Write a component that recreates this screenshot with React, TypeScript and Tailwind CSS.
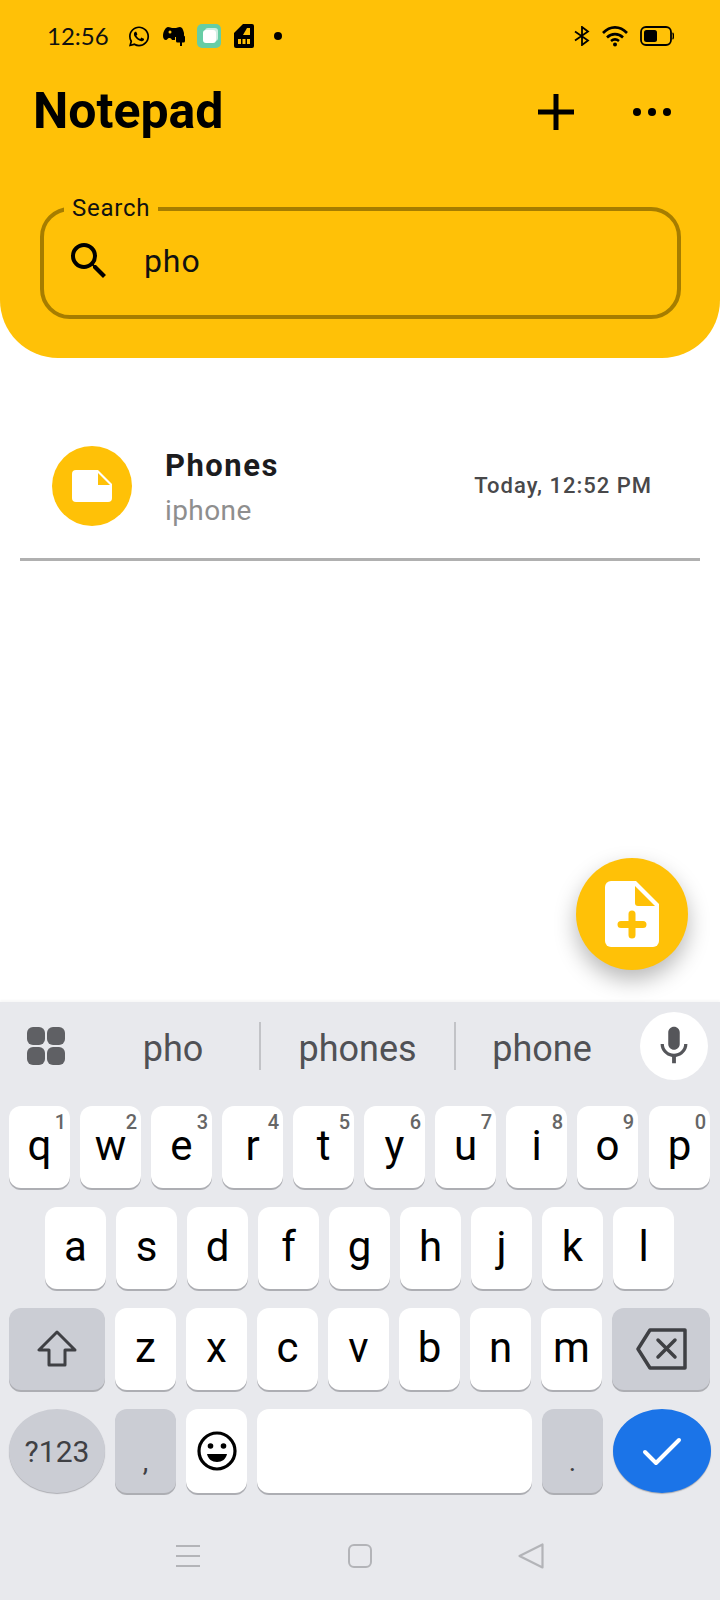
import { MdMic, MdSearch } from 'react-icons/md'
import { FaWhatsapp } from 'react-icons/fa'

const ROW_ONE = [
  ['q', '1'],
  ['w', '2'],
  ['e', '3'],
  ['r', '4'],
  ['t', '5'],
  ['y', '6'],
  ['u', '7'],
  ['i', '8'],
  ['o', '9'],
]
const ROW_TWO = ['a', 's', 'd', 'f', 'g', 'h', 'j', 'k', 'l']
const ROW_THREE = ['z', 'x', 'c', 'v', 'b', 'n', 'm']

function LetterKey({ label, hint }: { label: string; hint?: string }) {
  return (
    <div className="relative flex h-full w-[61px] shrink-0 items-center justify-center rounded-[12px] bg-white text-[42px] leading-none text-black shadow-[0_2px_0_#adaeb3]">
      <span className="relative top-[-1px]">{label}</span>
      {hint && (
        <span className="absolute right-[4px] top-[4px] text-[20px] font-medium leading-[24px] text-[#666]">{hint}</span>
      )}
    </div>
  )
}

function StatusBar() {
  return (
    <div className="flex h-[72px] items-center justify-between pl-[47px] pr-[46px]">
      <div className="flex items-center">
        <span className="w-[81px] font-['Lato'] text-[24px] leading-none text-[#111]">12:56</span>
        <FaWhatsapp className="h-[23px] w-[22px] text-black" />
        <svg viewBox="0 0 22 20" className="ml-[13px] h-[20px] w-[22px]">
          <path d="M5 1c2 0 3 1 4 1h4c1 0 2-1 4-1 2 0 3 2 4 6v4H12v3H9c-1-2-2-2-3-2-1 0-2 2-3 2-2 0-3-2-3-4 0-5 3-9 5-9z" fill="#000" />
          <circle cx="7" cy="6" r="1.500" fill="#FFC107" />
          <path d="M13 11a1.500 1.500 0 0 1 1.500-1.500h6A1.500 1.500 0 0 1 22 11v4a1.500 1.500 0 0 1-1.500 1.500H19V20h-2v-3.500h-2.500A1.500 1.500 0 0 1 13 15z" fill="#000" />
        </svg>
        <div className="ml-[12px] flex h-[24px] w-[24px] items-center justify-center rounded-[5px] bg-[#66CDA5]">
          <div className="h-[13px] w-[13px] rounded-[3px] bg-white shadow-[2px_-2px_0_#cfeee2]" />
        </div>
        <svg viewBox="0 0 20 24" className="ml-[13px] h-[24px] w-[20px]">
          <path d="M9 0h9a2 2 0 0 1 2 2v20a2 2 0 0 1-2 2H2a2 2 0 0 1-2-2V9z" fill="#000" />
          <path d="M13 4h3v7H9z" fill="#FFC107" />
          <path d="M4 15h3v5H4zM8.500 15h3v5h-3zM13 15h3v5h-3z" fill="#FFC107" />
        </svg>
        <div className="ml-[20px] h-[8px] w-[8px] rounded-full bg-black" />
      </div>
      <div className="flex items-center">
        <svg viewBox="0 0 16 20" className="h-[20px] w-[16px]" fill="none" stroke="#000" strokeWidth="1.800">
          <path d="M1 5.500l13 9-6 4.500V1l6 4.500-13 9" />
        </svg>
        <svg viewBox="0 0 28 22" className="ml-[12px] h-[22px] w-[28px]" fill="none" stroke="#000" strokeWidth="2.600">
          <path d="M1 8c7-7.500 17-7.500 24 0" />
          <path d="M5 12.500c4.500-4.500 11.500-4.500 16 0" />
          <path d="M9 16c2.500-2 5.500-2 8 0" />
          <circle cx="13" cy="19.500" r="2" fill="#000" stroke="none" />
        </svg>
        <svg viewBox="0 0 34 20" className="ml-[10px] h-[20px] w-[34px]">
          <rect x="1" y="1" width="30" height="18" rx="5" fill="none" stroke="#000" strokeWidth="1.800" />
          <rect x="4" y="4" width="13" height="12" rx="2.500" fill="#000" />
          <path d="M32.500 7c1.200.5 1.200 5.500 0 6" stroke="#000" strokeWidth="1.500" fill="none" />
        </svg>
      </div>
    </div>
  )
}

export default function App() {
  return (
    <div className="relative flex h-[1600px] w-[720px] flex-col overflow-hidden bg-white font-['Roboto',sans-serif]">
      <header className="h-[358px] shrink-0 rounded-b-[58px] bg-[#FFC107]">
        <StatusBar />
        <div className="flex h-[80px] items-center justify-between pl-[33px] pr-[49px]">
          <h1 className="mb-[2px] text-[50px] font-bold leading-none text-black">Notepad</h1>
          <div className="flex items-center gap-[59px]">
            <svg viewBox="0 0 36 36" className="h-[36px] w-[36px]">
              <path d="M15.500 0h5v15.500H36v5H20.500V36h-5V20.500H0v-5h15.500z" fill="#000" />
            </svg>
            <div className="flex gap-[7px]">
              <div className="h-[8px] w-[8px] rounded-full bg-black" />
              <div className="h-[8px] w-[8px] rounded-full bg-black" />
              <div className="h-[8px] w-[8px] rounded-full bg-black" />
            </div>
          </div>
        </div>
        <div className="relative ml-[40px] mt-[55px] flex h-[112px] w-[641px] items-center rounded-[30px] border-[4px] border-[#A67D00] pl-[21px]">
          <span className="absolute left-[20px] top-[-17px] bg-[#FFC107] px-[8px] text-[24px] leading-[28px] tracking-[0.75px] text-[#111]">Search</span>
          <MdSearch className="mb-[4px] h-[48px] w-[48px] text-black" />
          <span className="mb-[4px] ml-[31px] text-[32px] leading-none tracking-[0.9px] text-[#111]">pho</span>
        </div>
      </header>

      <main className="relative flex-1">
        <div className="mx-[20px] mt-[88px] flex h-[115px] items-start border-b-[3px] border-[#b0b0b0] pl-[32px] pr-[48px]">
          <div className="flex h-[80px] w-[80px] shrink-0 items-center justify-center rounded-full bg-[#FFC107]">
            <svg viewBox="0 0 40 32" className="h-[32px] w-[40px]">
              <path d="M4 0h22l14 14v14a4 4 0 0 1-4 4H4a4 4 0 0 1-4-4V4a4 4 0 0 1 4-4z" fill="#fff" />
              <path d="M26 3v12h12z" fill="#FFC107" />
            </svg>
          </div>
          <div className="ml-[33px] flex flex-col pt-[1px]">
            <span className="text-[31px] font-bold leading-[38px] tracking-[1.5px] text-[#1c1c1e]">Phones</span>
            <span className="mt-[9px] text-[28px] leading-[34px] tracking-[0.4px] text-[#8e8e8e]">iphone</span>
          </div>
          <span className="ml-auto mt-[25px] text-[22px] font-medium leading-[30px] tracking-[1px] text-[#48484a]">Today, 12:52 PM</span>
        </div>

        <div className="absolute bottom-[32px] right-[32px] flex h-[112px] w-[112px] items-center justify-center rounded-full bg-[#FFC107] shadow-[0_10px_22px_rgba(0,0,0,0.28)]">
          <svg viewBox="0 0 54 66" className="h-[66px] w-[54px]">
            <path d="M6 0h25l23 23v37a6 6 0 0 1-6 6H6a6 6 0 0 1-6-6V6a6 6 0 0 1 6-6z" fill="#fff" />
            <path d="M30 5v17a3 3 0 0 0 3 3h17z" fill="#FFC107" />
            <path d="M27 33v21M16 43.500h22" stroke="#FFC107" strokeWidth="7" strokeLinecap="round" />
          </svg>
        </div>
      </main>

      <div className="flex h-[598px] shrink-0 flex-col bg-[#E8E9ED] shadow-[0_-2px_2px_rgba(0,0,0,0.03)]">
        <div className="flex h-[104px] shrink-0 items-start pl-[27px] pr-[12px]">
          <div className="mt-[25px] grid h-[38px] w-[38px] grid-cols-2 gap-[2px]">
            <div className="rounded-[6px] bg-[#5f6064]" />
            <div className="rounded-[6px] bg-[#5f6064]" />
            <div className="rounded-[6px] bg-[#5f6064]" />
            <div className="rounded-[6px] bg-[#5f6064]" />
          </div>
          <div className="mt-[20px] flex h-[48px] w-[196px] items-center justify-center border-r-[2px] border-[#c2c3c7] pl-[22px] pt-[6px] text-[36px] leading-none text-[#505155]">pho</div>
          <div className="mt-[20px] flex h-[48px] w-[195px] items-center justify-center border-r-[2px] border-[#c2c3c7] pt-[6px] text-[36px] leading-none text-[#505155]">phones</div>
          <div className="mt-[20px] flex h-[48px] flex-1 items-center justify-center pr-[12px] pt-[6px] text-[36px] leading-none text-[#505155]">phone</div>
          <div className="mt-[10px] flex h-[68px] w-[68px] shrink-0 items-center justify-center rounded-full bg-white">
            <MdMic className="h-[46px] w-[46px] text-[#55565a]" />
          </div>
        </div>

        <div className="flex flex-col gap-[19px]">
          <div className="flex h-[82px] gap-[10px] pl-[9px]">
            {ROW_ONE.map(([k, n]) => (
              <LetterKey key={k} label={k} hint={n} />
            ))}
            <div className="ml-[1px]">
              <LetterKey label="p" hint="0" />
            </div>
          </div>
          <div className="flex h-[82px] gap-[10px] pl-[45px]">
            {ROW_TWO.map((k) => (
              <LetterKey key={k} label={k} />
            ))}
          </div>
          <div className="flex h-[82px] gap-[10px] pl-[9px]">
            <div className="flex h-full w-[96px] items-center justify-center rounded-[12px] bg-[#CBCDD4] shadow-[0_2px_0_#adaeb3]">
              <svg viewBox="0 0 40 38" className="h-[38px] w-[40px]" fill="none" stroke="#3f4044" strokeWidth="3" strokeLinejoin="round">
                <path d="M20 2L2 20h10v15h16V20h10z" />
              </svg>
            </div>
            {ROW_THREE.map((k) => (
              <LetterKey key={k} label={k} />
            ))}
            <div className="flex h-full w-[98px] items-center justify-center rounded-[12px] bg-[#CBCDD4] shadow-[0_2px_0_#adaeb3]">
              <svg viewBox="0 0 52 42" className="ml-[1px] h-[42px] w-[52px]" fill="none" stroke="#3f4044" strokeWidth="3.500" strokeLinejoin="round" strokeLinecap="round">
                <path d="M14 2h35v38H14L2 21z" />
                <path d="M22 12l17 17M39 12L22 29" />
              </svg>
            </div>
          </div>
          <div className="flex h-[84px] gap-[10px] pl-[9px]">
            <div className="flex h-full w-[96px] items-center justify-center rounded-[50%] bg-[#CBCDD4] text-[30px] text-[#3f4044] shadow-[0_1px_1px_#adaeb3]">?123</div>
            <div className="flex h-full w-[61px] items-center justify-center rounded-[12px] bg-[#CBCDD4] pt-[22px] text-[28px] text-[#3f4044] shadow-[0_2px_0_#adaeb3]">,</div>
            <div className="flex h-full w-[61px] items-center justify-center rounded-[12px] bg-white shadow-[0_2px_0_#adaeb3]">
              <svg viewBox="0 0 40 40" className="h-[40px] w-[40px]">
                <circle cx="20" cy="20" r="18" fill="none" stroke="#000" strokeWidth="3.200" />
                <circle cx="13.500" cy="15" r="2.800" fill="#000" />
                <circle cx="26.500" cy="15" r="2.800" fill="#000" />
                <path d="M10 23h20c-1 5-5 8-10 8s-9-3-10-8z" fill="#000" />
              </svg>
            </div>
            <div className="h-full w-[275px] rounded-[12px] bg-white shadow-[0_2px_0_#adaeb3]" />
            <div className="flex h-full w-[61px] items-center justify-center rounded-[12px] bg-[#CBCDD4] pt-[22px] text-[28px] text-[#3f4044] shadow-[0_2px_0_#adaeb3]">.</div>
            <div className="flex h-full w-[98px] items-center justify-center rounded-[50%] bg-[#1B74E8] shadow-[0_1px_1px_#adaeb3]">
              <svg viewBox="0 0 40 30" className="h-[30px] w-[40px]" fill="none" stroke="#fff" strokeWidth="4" strokeLinecap="round" strokeLinejoin="round">
                <path d="M3 16l11 11L37 4" />
              </svg>
            </div>
          </div>
        </div>

        <div className="flex flex-1 items-center pt-[19px]">
          <div className="ml-[176px] flex h-[22px] w-[24px] flex-col justify-between">
            <div className="h-[2px] bg-[#b3b4b8]" />
            <div className="h-[2px] bg-[#b3b4b8]" />
            <div className="h-[2px] bg-[#b3b4b8]" />
          </div>
          <div className="ml-[148px] h-[24px] w-[24px] rounded-[6px] border-[2px] border-[#b3b4b8]" />
          <svg viewBox="0 0 26 26" className="ml-[146px] h-[26px] w-[26px]" fill="none" stroke="#b3b4b8" strokeWidth="2.200" strokeLinejoin="round">
            <path d="M1.500 13L24.500 1.500v23z" />
          </svg>
        </div>
      </div>
    </div>
  )
}
